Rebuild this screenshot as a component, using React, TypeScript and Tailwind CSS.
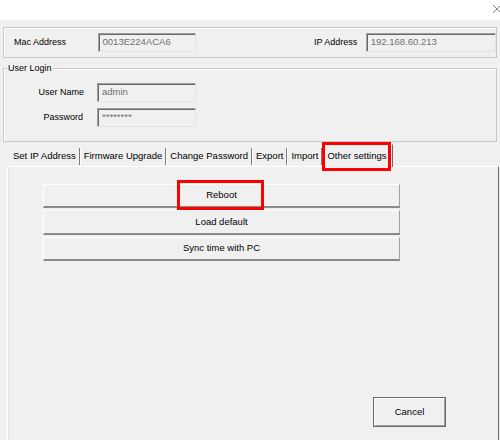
import React from "react";

const font = { fontFamily: '"Liberation Sans", Arial, sans-serif' };

function Field({ value, className = "" }: { value: string; className?: string }) {
  return (
    <div
      className={
        "h-[19px] flex items-center pl-[4px] bg-[#f0f0f0] border-t border-l border-t-[#a0a0a0] border-l-[#a0a0a0] border-b border-r border-b-[#e3e3e3] border-r-[#e3e3e3] shadow-[inset_1px_1px_0_#696969] text-[9.5px] text-[#707070] " +
        className
      }
    >
      {value}
    </div>
  );
}

function ActionButton({ label, h }: { label: string; h: string }) {
  return (
    <div
      className={
        "w-full flex items-center justify-center text-[9.5px] text-black bg-[#f0f0f0] border-t border-l border-t-white border-l-white border-r border-b-2 border-r-[#a0a0a0] border-b-[#8a8a8a] " +
        h
      }
    >
      {label}
    </div>
  );
}

const tabs = ["Set IP Address", "Firmware Upgrade", "Change Password", "Export", "Import"];

export default function App() {
  return (
    <div className="w-[500px] h-[440px] overflow-hidden bg-[#f0f0f0] flex flex-col text-black" style={font}>
      {/* title bar */}
      <div className="h-[20px] bg-white relative shrink-0">
        <svg className="absolute left-[492px] top-[4px]" width="10" height="10" viewBox="0 0 10 10">
          <path d="M1 1 L9 9 M9 1 L1 9" stroke="#8a8a8a" strokeWidth="1" />
        </svg>
      </div>

      {/* device info */}
      <div className="mt-[7px] ml-[3px] w-[494px] h-[31px] border border-[#c9c9c9] shadow-[inset_1px_1px_0_#ffffff] flex items-center">
        <span className="ml-[10px] w-[84px] text-[9px]">Mac Address</span>
        <Field value="0013E224ACA6" className="w-[99px]" />
        <span className="ml-[118px] w-[52px] text-[9px]">IP Address</span>
        <Field value="192.168.60.213" className="w-[131px]" />
      </div>

      {/* user login */}
      <div className="relative mt-[10px] ml-[3px] w-[494px] h-[74px] border border-[#c9c9c9] shadow-[inset_1px_1px_0_#ffffff]">
        <span className="absolute left-[3px] top-[-7px] px-[1px] bg-[#f0f0f0] text-[9px] leading-[12px]">User Login</span>
        <div className="pt-[14px] flex flex-col gap-[6px]">
          <div className="flex items-center">
            <span className="w-[80px] text-right text-[9px]">User Name</span>
            <Field value="admin" className="ml-[13px] w-[99px]" />
          </div>
          <div className="flex items-center">
            <span className="w-[79px] text-right text-[9px]">Password</span>
            <Field value="********" className="ml-[14px] w-[99px] text-[8px]" />
          </div>
        </div>
      </div>

      {/* tabs */}
      <div className="mt-[1px] ml-[7px] h-[23px] flex items-end">
        <div className="flex items-center h-[19px] pl-[2px]">
          {tabs.map((t) => (
            <div
              key={t}
              className="h-[17px] flex items-center pl-[4px] pr-[3px] text-[9.5px] border-r border-r-[#7a7a7a] shadow-[1px_0_0_#ffffff]"
            >
              {t}
            </div>
          ))}
        </div>
        <div className="relative h-[23px] mb-[-1px] flex items-start pt-[4px] pl-[5px] pr-[5px] bg-[#f0f0f0] border-r border-r-[#696969] border-t border-t-white text-[9.5px] z-10">
          Other settings
          <div className="absolute left-[0px] top-[-3px] right-[1px] h-[29px] border-[3px] border-[#ff0000]" />
        </div>
      </div>

      {/* tab page */}
      <div className="ml-[7px] w-[492px] flex-1 bg-[#f0f0f0] border-t border-l border-t-white border-l-white border-r border-r-[#696969] shadow-[inset_1px_0_0_#e3e3e3] flex flex-col">
        <div className="relative mt-[17px] ml-[35px] w-[357px] flex flex-col gap-[2px]">
          <ActionButton label="Reboot" h="h-[24px]" />
          <ActionButton label="Load default" h="h-[25px]" />
          <ActionButton label="Sync time with PC" h="h-[24px]" />
          <div className="absolute left-[134px] top-[-4px] w-[87px] h-[30px] border-[3px] border-[#ff0000]" />
        </div>
        <div className="mt-auto mb-[13px] self-end mr-[52px] w-[73px] h-[30px] border border-[#6a6a6a] flex">
          <div className="flex-1 flex items-center justify-center text-[9.5px] border-t border-l border-t-white border-l-white border-r border-b border-r-[#a0a0a0] border-b-[#a0a0a0]">
            Cancel
          </div>
        </div>
      </div>
    </div>
  );
}
